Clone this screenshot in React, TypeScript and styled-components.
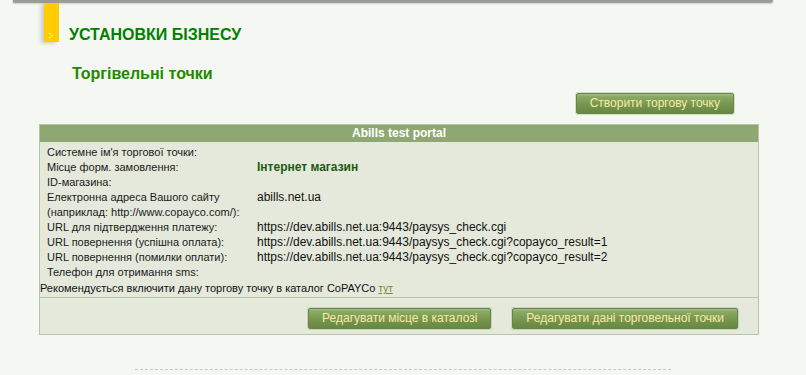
import React from 'react';
import styled, { createGlobalStyle } from 'styled-components';

const rows: { label: React.ReactNode; value?: string; strong?: boolean }[] = [
  { label: "Системне ім'я торгової точки:" },
  { label: 'Місце форм. замовлення:', value: 'Інтернет магазин', strong: true },
  { label: 'ID-магазина:' },
  {
    label: (
      <>
        Електронна адреса Вашого сайту
        <br />
        (наприклад: http://www.copayco.com/):
      </>
    ),
    value: 'abills.net.ua'
  },
  { label: 'URL для підтвердження платежу:', value: 'https://dev.abills.net.ua:9443/paysys_check.cgi' },
  {
    label: 'URL повернення (успішна оплата):',
    value: 'https://dev.abills.net.ua:9443/paysys_check.cgi?copayco_result=1'
  },
  {
    label: 'URL повернення (помилки оплати):',
    value: 'https://dev.abills.net.ua:9443/paysys_check.cgi?copayco_result=2'
  },
  { label: 'Телефон для отримання sms:' }
];

function App() {
  return (
    <Page>
      <GlobalStyle />
      <TopBar />
      <TitleRow>
        <Marker>
          <svg width='5' height='5' viewBox='0 0 5 5'>
            <rect x='0' y='0' width='2' height='1' fill='#fff' />
            <rect x='2' y='2' width='2' height='1' fill='#fff' />
            <rect x='0' y='4' width='2' height='1' fill='#fff' />
          </svg>
        </Marker>
        <Title>УСТАНОВКИ БІЗНЕСУ</Title>
      </TitleRow>
      <SubTitle>Торгівельні точки</SubTitle>
      <Toolbar>
        <GreenButton>Створити торгову точку</GreenButton>
      </Toolbar>
      <Card>
        <CardHeader>Abills test portal</CardHeader>
        <Fields>
          {rows.map((row, i) => (
            <React.Fragment key={i}>
              <Label>{row.label}</Label>
              <Value $strong={row.strong}>{row.value}</Value>
            </React.Fragment>
          ))}
        </Fields>
        <Hint>
          Рекомендується включити дану торгову точку в каталог CoPAYCo <HintLink href='#'>тут</HintLink>
        </Hint>
        <Actions>
          <GreenButton>Редагувати місце в каталозі</GreenButton>
          <GreenButton>Редагувати дані торговельної точки</GreenButton>
        </Actions>
      </Card>
      <Footer />
    </Page>
  );
}
export default App;

const GlobalStyle = createGlobalStyle`
  body {
    margin: 0;
    background-color: #f5f7f2;
    font-family: 'Liberation Sans', Arial, sans-serif;
  }
`;

const Page = styled.div`
  display: flex;
  flex-direction: column;
  width: 806px;
  height: 375px;
  overflow: hidden;
  background-color: #f5f7f2;
`;

const TopBar = styled.div`
  margin: 0 33px 0 13px;
  height: 2px;
  background-color: #9a9a9a;
  border-bottom-right-radius: 3px;
  box-shadow: 0 1px 2px rgba(0, 0, 0, 0.5);
`;

const TitleRow = styled.div`
  display: flex;
  margin-top: 1px;
  padding-left: 44px;
  height: 39px;
`;

const Marker = styled.div`
  display: flex;
  align-items: flex-end;
  padding: 0 0 4px 5px;
  width: 15px;
  height: 39px;
  box-sizing: border-box;
  background-color: #ffcc00;
  box-shadow: -3px 1px 4px rgba(0, 0, 0, 0.18);
`;

const Title = styled.h1`
  margin: 0 0 0 10px;
  padding-top: 23px;
  color: #008000;
  font-size: 16px;
  line-height: 18px;
  font-weight: bold;
  white-space: nowrap;
`;

const SubTitle = styled.h2`
  margin: 23px 0 0 72px;
  color: #1f8a00;
  font-size: 16px;
  line-height: 18px;
  font-weight: bold;
`;

const Toolbar = styled.div`
  display: flex;
  justify-content: flex-end;
  margin-top: 10px;
  padding-right: 72px;
`;

const GreenButton = styled.button`
  height: 21px;
  padding: 0 13px;
  background: linear-gradient(#a2bb82 0%, #8aa866 14%, #77974f 55%, #678743 100%);
  border: 1px solid #66864a;
  border-radius: 2px;
  box-shadow: 0 0 0 1px rgba(150, 175, 120, 0.35);
  color: #f6eaa2;
  font-family: 'Liberation Sans', Arial, sans-serif;
  font-size: 12px;
  line-height: 19px;
  white-space: nowrap;
  cursor: pointer;
`;

const Card = styled.section`
  display: flex;
  flex-direction: column;
  margin: 10px 0 0 39px;
  width: 720px;
  box-sizing: border-box;
  background-color: #e4e9dc;
  border: 1px solid #b8c4a7;
`;

const CardHeader = styled.div`
  height: 17px;
  background-color: #8fa872;
  color: #fff;
  font-size: 12px;
  font-weight: bold;
  line-height: 17px;
  text-align: center;
`;

const Fields = styled.div`
  display: grid;
  grid-template-columns: 210px 1fr;
  padding: 3px 0 0 7px;
`;

const Label = styled.div`
  color: #1a1a1a;
  font-size: 11px;
  line-height: 15px;
`;

const Value = styled.div<{ $strong?: boolean }>`
  color: ${(props) => (props.$strong ? '#1c5a10' : '#111')};
  font-size: 12px;
  font-weight: ${(props) => (props.$strong ? 'bold' : 'normal')};
  line-height: 15px;
`;

const Hint = styled.div`
  height: 17px;
  border-bottom: 1px solid #b8c4a7;
  color: #111;
  font-size: 11px;
  line-height: 17px;
`;

const HintLink = styled.a`
  color: #6b8a2e;
  font-size: 10px;
  text-decoration: underline;
`;

const Actions = styled.div`
  display: flex;
  justify-content: flex-end;
  gap: 21px;
  padding: 10px 20px 5px 0;
`;

const Footer = styled.div`
  margin: 34px auto 0;
  width: 536px;
  border-top: 1px dashed #c8c8c8;
`;
